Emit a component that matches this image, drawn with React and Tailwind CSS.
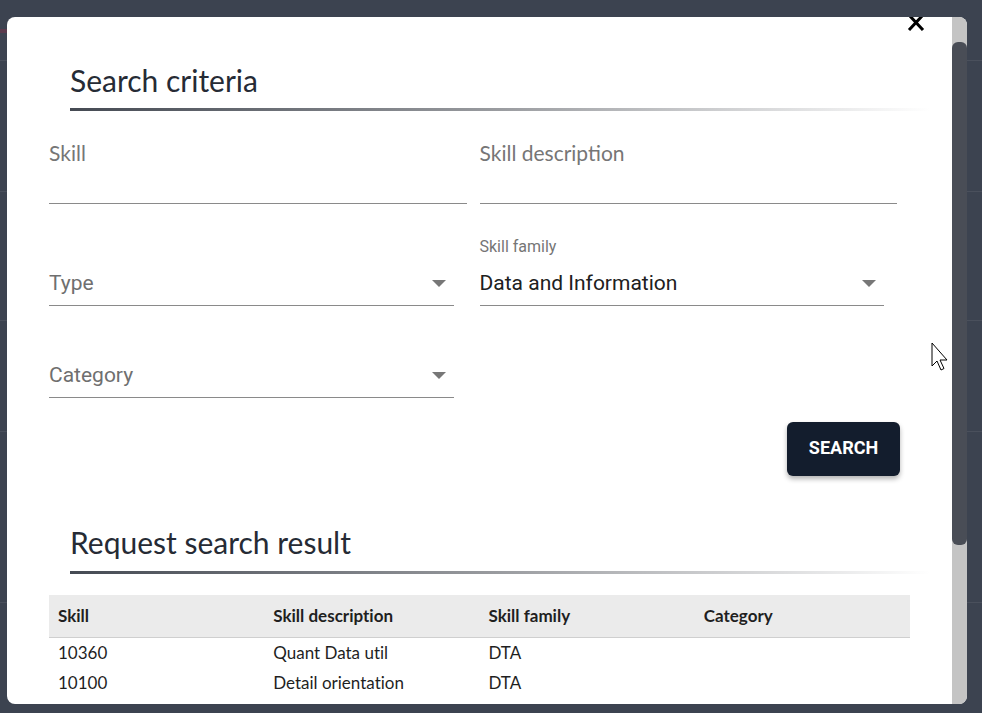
import React from 'react';

const rows = [
  { skill: '10360', description: 'Quant Data util', family: 'DTA', category: '' },
  { skill: '10100', description: 'Detail orientation', family: 'DTA', category: '' },
];

function Caret() {
  return (
    <svg width="14" height="7" viewBox="0 0 14 7" className="shrink-0">
      <path d="M0 0h14L7 7z" fill="#777777" />
    </svg>
  );
}

function SectionTitle({ children, gap }) {
  return (
    <div className="ml-[21px] mr-[-33px]">
      <h2 className="font-['Lato',sans-serif] text-[30px] leading-[36px] text-[#262b35] [font-variant-ligatures:none]">
        {children}
      </h2>
      <div className={`${gap} h-[3px] bg-gradient-to-r from-[#454a53] via-[#9a9ca0] to-white/0`} />
    </div>
  );
}

function TextField({ label }) {
  return (
    <div>
      <div className="font-['Lato',sans-serif] text-[21px] leading-6 text-[#767676]">{label}</div>
      <div className="h-[39px] border-b border-[#8a8a8a]" />
    </div>
  );
}

function SelectField({ label, value, placeholder }) {
  return (
    <div className="mr-[13px] font-['Roboto',sans-serif]">
      <div className="h-4 text-[16px] leading-4 text-[#757575]">{label}</div>
      <div className="mt-4 flex items-center justify-between border-b border-[#8a8a8a] pb-[10px] pr-[8px]">
        <span className={`text-[21px] leading-6 ${value ? 'text-[#202020]' : 'text-[#6f6f6f]'}`}>
          {value || placeholder}
        </span>
        <Caret />
      </div>
    </div>
  );
}

export default function App() {
  return (
    <div className="relative h-[713px] w-[982px] overflow-hidden bg-[#3c4350]">
      {/* page behind the overlay */}
      <div className="absolute inset-0">
        <div className="mt-[29px] h-[4px] w-[8px] bg-[#5a3a4c]" />
        <div className="mt-[27px] h-px w-full bg-[#4a505c]" />
        <div className="mt-[130px] h-px w-full bg-[#4a505c]" />
        <div className="mt-[128px] h-px w-full bg-[#4a505c]" />
        <div className="mt-[110px] h-px w-full bg-[#4a505c]" />
        <div className="mt-[170px] h-px w-full bg-[#4a505c]" />
      </div>

      <div className="relative pl-[7px] pt-[17px]">
        <div className="flex h-[687px] w-[960px] overflow-hidden rounded-lg bg-white">
          <div className="relative flex-1 pl-[42px] pr-[55px] pt-[45px]">
            <svg
              width="18"
              height="17"
              viewBox="0 0 18 17"
              className="absolute right-[27px] top-[-3px]"
            >
              <path d="M2 1l14 15M16 1L2 16" stroke="#000" strokeWidth="3" />
            </svg>

            <SectionTitle gap="mt-[10px]">Search criteria</SectionTitle>

            <div className="mt-[30px] grid grid-cols-2 gap-x-[13px]">
              <TextField label="Skill" />
              <TextField label="Skill description" />
            </div>

            <div className="mt-[35px] grid grid-cols-2 gap-x-[13px] gap-y-[25px]">
              <SelectField placeholder="Type" />
              <SelectField label="Skill family" value="Data and Information" />
              <SelectField placeholder="Category" />
            </div>

            <div className="mt-[24px] flex justify-end">
              <button className="mr-[-3px] h-[54px] w-[113px] rounded-md bg-[#131d2d] pb-[3px] font-['Roboto',sans-serif] text-[18px] font-bold text-white shadow-[0_3px_5px_rgba(0,0,0,0.3)]">
                SEARCH
              </button>
            </div>

            <div className="mt-[48px]">
              <SectionTitle gap="mt-[11px]">Request search result</SectionTitle>
            </div>

            <table className="mt-[21px] mr-[-13px] w-[861px] table-fixed font-['Lato',sans-serif] text-[17px] leading-6 text-[#1f1f1f] [font-variant-ligatures:none]">
              <thead>
                <tr className="h-[42px] border-b border-[#cfcfcf] bg-[#ebebeb] text-left">
                  <th className="px-[9px] font-bold">Skill</th>
                  <th className="px-[9px] font-bold">Skill description</th>
                  <th className="px-[9px] font-bold">Skill family</th>
                  <th className="px-[9px] font-bold">Category</th>
                </tr>
              </thead>
              <tbody>
                {rows.map((row) => (
                  <tr key={row.skill} className="h-[30px]">
                    <td className="px-[9px] pt-[2px]">{row.skill}</td>
                    <td className="px-[9px] pt-[2px]">{row.description}</td>
                    <td className="px-[9px] pt-[2px]">{row.family}</td>
                    <td className="px-[9px] pt-[2px]">{row.category}</td>
                  </tr>
                ))}
              </tbody>
            </table>
          </div>

          <div className="flex w-[15px] flex-col bg-[#c4c4c4]">
            <div className="mt-[25px] h-[503px] rounded-[6px] bg-[#494d56]" />
          </div>
        </div>
      </div>

      <svg width="20" height="30" viewBox="0 0 20 30" className="absolute left-[931px] top-[342px]">
        <path d="M1 1v23l5-5 4 9 3-1.5-4-8.5h7z" fill="#fff" stroke="#000" strokeWidth="1" />
      </svg>
    </div>
  );
}
